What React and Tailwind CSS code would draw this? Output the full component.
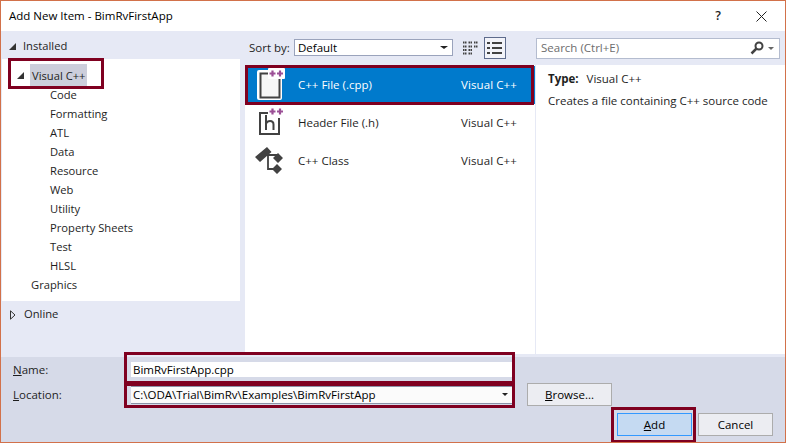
import React from 'react';

const font = { fontFamily: '"Open Sans", "Noto Sans", sans-serif' };

const treeItems = ['Code', 'Formatting', 'ATL', 'Data', 'Resource', 'Web', 'Utility', 'Property Sheets', 'Test', 'HLSL'];

const Plus = ({ color = '#9b4f96' }) => (
  <path d="M15.500 6.500h6M18.500 3.500v6M23 6.500h6M26 3.500v6" stroke={color} strokeWidth="2.200" />
);

const CppFileIcon = () => (
  <svg width="32" height="36" viewBox="0 0 32 36" className="shrink-0">
    <rect x="3" y="3" width="25" height="30" rx="2" fill="#fff" />
    <rect x="6.500" y="6.500" width="19" height="24" fill="#f6f6f6" />
    <path d="M16 6.500H6.500v24h19V12" fill="none" stroke="#424242" strokeWidth="2" />
    <rect x="14" y="1" width="17" height="11" rx="1" fill="#fff" />
    <Plus />
  </svg>
);

const HeaderIcon = () => (
  <svg width="32" height="36" viewBox="0 0 32 36" className="shrink-0">
    <path d="M14 8H6v21h19V13" fill="none" stroke="#424242" strokeWidth="2" />
    <path d="M12 10v15M12 18.500c1-2 2.500-2.500 4-2.500 2 0 3.500 1 3.500 3.500V25" fill="none" stroke="#424242" strokeWidth="2" />
    <Plus />
  </svg>
);

const ClassIcon = () => (
  <svg width="32" height="36" viewBox="0 0 32 36" className="shrink-0">
    <path d="M10 12h13M14 12v14h8" fill="none" stroke="#424242" strokeWidth="1.800" />
    <path d="M1 14L13 4l4.500 5L6 19zM24 10l5 5-5 5-5-5zM23 21l5 5-5 5-5-5z" fill="#424242" />
  </svg>
);

const Row = ({ icon, name, selected }) => (
  <div className={`flex items-center h-[38px] pl-[9px] pr-[17px] ${selected ? 'bg-[#007acc] text-white' : 'text-[#1e1e1e]'}`}>
    <div className="w-[44px]">{icon}</div>
    <span className="flex-1">{name}</span>
    <span className="w-[57px] whitespace-nowrap tracking-[0.1px]">Visual C++</span>
  </div>
);

const Highlight = ({ className }) => (
  <div className={`absolute border-[3px] border-[#7f0020] pointer-events-none ${className}`} />
);

export default function App() {
  return (
    <div style={font} className="relative w-[786px] h-[443px] overflow-hidden bg-white border border-[#d2714a] flex flex-col text-[11.5px] text-[#1e1e1e]">
      {/* Title bar */}
      <div className="h-[30px] shrink-0 flex items-center pl-[8px] pr-[18px]">
        <span className="flex-1 text-black">Add New Item - BimRvFirstApp</span>
        <span className="mr-[35px] font-semibold text-[12.5px]">?</span>
        <svg width="11" height="11" viewBox="0 0 11 11">
          <path d="M.5.5l10 10M10.500.5l-10 10" stroke="#222" />
        </svg>
      </div>

      {/* Main */}
      <div className="h-[326px] shrink-0 flex bg-[#e6e9f5]">
        {/* Left tree */}
        <div className="w-[244px] shrink-0 flex flex-col text-[11.2px]">
          <div className="h-[28px] shrink-0 flex items-center pl-[8px] pt-[2px]">
            <span className="w-0 h-0 border-l-[7px] border-l-transparent border-b-[7px] border-b-[#333] mr-[7px]" />
            <span>Installed</span>
          </div>
          <div className="ml-[1px] w-[238px] h-[242px] shrink-0 bg-white">
            <div className="h-[19px] mt-[7px] flex items-center pl-[15px]">
              <span className="w-0 h-0 border-l-[7px] border-l-transparent border-b-[7px] border-b-[#333] mr-[6px]" />
              <span className="bg-[#cccedb] px-[2px] h-[24px] leading-[24px]">Visual C++</span>
            </div>
            <div>
              {treeItems.map((item) => (
                <div key={item} className="h-[19px] leading-[19px] pl-[48px]">{item}</div>
              ))}
              <div className="h-[19px] leading-[19px] pl-[29px]">Graphics</div>
            </div>
          </div>
          <div className="h-[25px] mt-[1px] shrink-0 flex items-center pl-[9px]">
            <svg width="6" height="10" viewBox="0 0 6 10" className="mr-[8px]">
              <path d="M.5.8v8.400L5 5z" fill="#e6e9f5" stroke="#333" />
            </svg>
            <span>Online</span>
          </div>
        </div>

        {/* Centre list */}
        <div className="w-[290px] shrink-0 flex flex-col">
          <div className="h-[34px] shrink-0 flex items-center pl-[4px] pb-[1px]">
            <span className="w-[45px]">Sort by:</span>
            <div className="w-[159px] h-[17px] bg-white border border-[#9aa3bc] flex items-center pl-[3px] pr-[4px] text-black">
              <span className="flex-1">Default</span>
              <span className="w-0 h-0 border-x-[4px] border-x-transparent border-t-[3px] border-t-[#222]" />
            </div>
            <svg width="15" height="14" viewBox="0 0 15 14" className="ml-[10px]">
              <path d="M0 1.500h4M5.500 1.500h4M11 1.500h4M0 5.500h4M5.500 5.500h4M11 5.500h4M0 9h4M5.500 9h4M0 12.500h4M5.500 12.500h4" stroke="#424242" strokeWidth="2" strokeDasharray="1.500 .5" />
            </svg>
            <div className="ml-[6px] w-[22px] h-[22px] border border-[#5e6b8c] bg-[#f2f3f9] flex items-center justify-center">
              <svg width="16" height="14" viewBox="0 0 16 14">
                <path d="M0 2h3M5 2h10M0 7h3M5 7h10M0 12h3M5 12h10" stroke="#424242" strokeWidth="2" />
              </svg>
            </div>
          </div>
          <div className="h-[289px] bg-white pt-[1px]">
            <Row selected icon={<CppFileIcon />} name="C++ File (.cpp)" />
            <Row icon={<HeaderIcon />} name="Header File (.h)" />
            <Row icon={<ClassIcon />} name="C++ Class" />
          </div>
        </div>

        {/* Details */}
        <div className="flex-1 flex flex-col">
          <div className="h-[34px] shrink-0 flex items-center pl-[1px] pr-[5px]">
            <div className="w-full h-[21px] bg-white border border-[#b4bccf] flex items-center pl-[4px] pr-[5px] text-[#6d6d6d]">
              <span className="flex-1">Search (Ctrl+E)</span>
              <svg width="14" height="14" viewBox="0 0 14 14">
                <circle cx="9" cy="5" r="3.500" fill="none" stroke="#424242" strokeWidth="2" />
                <path d="M6.500 7.500L1.500 12.500" stroke="#424242" strokeWidth="2.500" />
              </svg>
              <span className="ml-[4px] w-0 h-0 border-x-[3px] border-x-transparent border-t-[3px] border-t-[#666]" />
            </div>
          </div>
          <div className="h-[289px] bg-white border-l border-[#e6e9f5] pl-[12px] pt-[5px]">
            <div className="flex h-[18px] items-center">
              <span className="font-bold mr-[8px]">Type:</span>
              <span>Visual C++</span>
            </div>
            <div className="mt-[4px]">Creates a file containing C++ source code</div>
          </div>
        </div>
      </div>

      {/* Bottom */}
      <div className="flex-1 bg-[#d6dae8] relative flex flex-col">
        <div className="flex items-center h-[21px] mt-[2px] pl-[12px]">
          <span className="w-[118px]"><u>N</u>ame:</span>
          <div className="w-[381px] h-[15px] bg-white pl-[2px] flex items-center text-black">BimRvFirstApp.cpp</div>
        </div>
        <div className="flex items-center mt-[3px] pl-[12px]">
          <span className="w-[118px]"><u>L</u>ocation:</span>
          <div className="w-[381px] h-[18px] bg-[#fbfbfb] border-t border-b border-[#8b93a8] pl-[2px] pr-[4px] flex items-center text-black">
            <span className="flex-1">C:\ODA\Trial\BimRv\Examples\BimRvFirstApp</span>
            <span className="w-0 h-0 border-x-[3px] border-x-transparent border-t-[3px] border-t-[#222]" />
          </div>
          <button className="ml-[15px] w-[85px] h-[23px] bg-[#ecedf2] border border-[#acacac] text-black"><u>B</u>rowse...</button>
        </div>
        <div className="flex justify-end mt-[7px] pr-[12px]">
          <button className="w-[75px] h-[23px] bg-[#c5daf2] border border-[#3399ff] text-black"><u>A</u>dd</button>
          <button className="ml-[6px] w-[75px] h-[23px] bg-[#ecedf2] border border-[#acacac] text-black">Cancel</button>
        </div>
      </div>

      <Highlight className="left-[7px] top-[57px] w-[96px] h-[31px]" />
      <Highlight className="left-[244px] top-[64px] w-[289px] h-[40px]" />
      <Highlight className="left-[123px] top-[351px] w-[391px] h-[32px]" />
      <Highlight className="left-[123px] top-[382px] w-[391px] h-[25px]" />
      <Highlight className="left-[610px] top-[406px] w-[85px] h-[36px]" />
    </div>
  );
}
